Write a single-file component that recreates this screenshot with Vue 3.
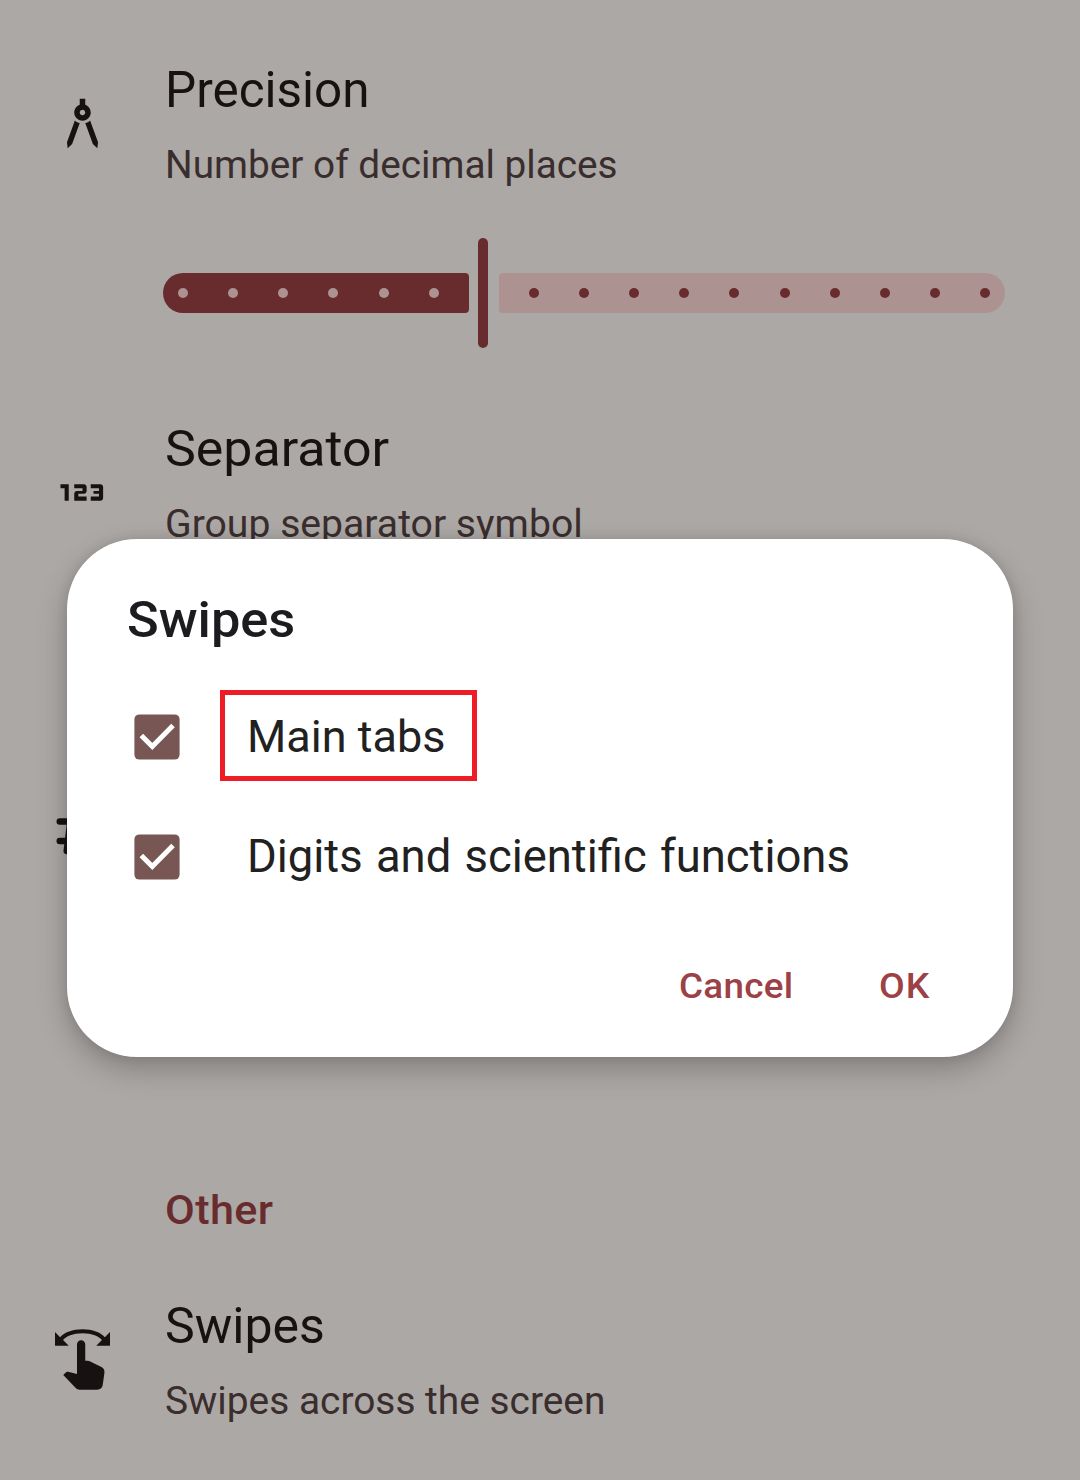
<script setup>
const step = 50.125
const activeTicks = Array.from({ length: 6 }, (_, i) => 15 + i * step)
const inactiveTicks = Array.from({ length: 10 }, (_, i) => 29.9 + i * step)
const options = [
  { label: 'Main tabs', marked: true, cls: 'o-main' },
  { label: 'Digits and scientific functions', marked: false, cls: 'o-digits' }
]
</script>

<template>
  <div class="screen">
    <main class="settings">
      <section class="item precision">
        <svg class="icon" viewBox="-.18 -.18 24 24"><path d="M6.36 18.78 6.61 21l1.62-1.54 2.77-7.6c-.68-.17-1.28-.51-1.77-.98zM14.77 10.88c-.49.47-1.1.81-1.77.98l2.77 7.6L17.39 21l.26-2.22zM15 8c0-1.3-.84-2.4-2-2.82V3h-2v2.18C9.84 5.6 9 6.7 9 8c0 1.66 1.34 3 3 3s3-1.34 3-3zm-3 1c-.55 0-1-.45-1-1s.45-1 1-1 1 .45 1 1-.45 1-1 1z" /></svg>
        <div class="body">
          <h2><span class="t-precision">Precision</span></h2>
          <p><span class="s-precision">Number of decimal places</span></p>
          <div class="slider">
            <div class="track active">
              <i v-for="x in activeTicks" :key="x" class="tick" :style="{ left: x + 'px' }"></i>
            </div>
            <div class="thumb"></div>
            <div class="track inactive">
              <i v-for="x in inactiveTicks" :key="x" class="tick" :style="{ left: x + 'px' }"></i>
            </div>
          </div>
        </div>
      </section>

      <section class="item separator">
        <svg class="icon digits" viewBox="-.18 -.18 24 24"><path d="M7 15H5.500v-4.500H4V9h3zM13.500 13.500h-3v-1h2c.55 0 1-.45 1-1V10c0-.55-.45-1-1-1H9v1.500h3v1h-2c-.55 0-1 .45-1 1V15h4.500zM19.500 14v-4c0-.55-.45-1-1-1H15v1.500h3v1h-2v1h2v1h-3V15h3.500c.55 0 1-.45 1-1z" /></svg>
        <div class="body">
          <h2><span class="t-separator">Separator</span></h2>
          <p><span class="s-separator">Group separator symbol</span></p>
        </div>
      </section>

      <section class="item number">
        <svg class="icon hash" viewBox="-.8 0 66 66"><path d="M10 18.500h46M10 38h46M22 7l-5 41M46 7l-5 41" /></svg>
      </section>

      <h3><span class="t-other">Other</span></h3>

      <section class="item swipes">
        <svg class="icon" viewBox="-.18 -.18 24 24"><path d="M18.890 14.750l-4.090-2.040c-.28-.14-.58-.21-.89-.21H13v-6C13 5.670 12.330 5 11.500 5S10 5.670 10 6.500v10.740L6.750 16.500c-.33-.07-.68.03-.92.28L5 17.620l4.540 4.790c.38.380.89.590 1.420.590h6.410c1 0 1.840-.73 1.980-1.720l.63-4.460c.12-.85-.32-1.680-1.090-2.070zM20.130 3.870C18.690 2.170 15.600 1 12 1S5.310 2.170 3.870 3.870L2 2v5h5L4.930 4.930c1-1.290 3.700-2.430 7.070-2.430s6.070 1.140 7.070 2.430L17 7h5V2z" /></svg>
        <div class="body">
          <h2><span class="t-swipes">Swipes</span></h2>
          <p><span class="s-swipes">Swipes across the screen</span></p>
        </div>
      </section>
    </main>

    <div class="dialog" role="dialog">
      <h1><span class="t-dialog">Swipes</span></h1>
      <label v-for="o in options" :key="o.label" class="option">
        <svg class="check" viewBox="0 0 46 46"><rect x=".4" y=".4" width="45.200" height="45.200" rx="5" /><path d="M7.300 21.500 18.300 32.500 39 11.500" /></svg>
        <span :class="o.cls">{{ o.label }}</span>
        <i v-if="o.marked" class="marker"></i>
      </label>
      <div class="actions">
        <button class="cancel"><span class="b-cancel">Cancel</span></button>
        <button class="ok"><span class="b-ok">OK</span></button>
      </div>
    </div>
  </div>
</template>

<style>
body { margin: 0; background: #aca8a6; }
</style>

<style scoped>
.screen { position: relative; width: 1080px; height: 1480px; overflow: hidden; background: #aca8a6; font-family: Roboto, "Noto Sans", sans-serif; color: #171211; }
.settings { display: flex; flex-direction: column; padding-top: 60px; }
.item { display: flex; align-items: flex-start; flex: none; padding-left: 49px; }
.precision, .separator { height: 359px; }
.icon { width: 66px; height: 66px; flex: none; margin-top: 30.4px; fill: #171211; }
.digits { margin-top: 40.400px; }
.body { margin-left: 50px; }
h1, h2, h3, p { margin: 0; font-weight: 400; white-space: nowrap; }
h1 span, h2 span, h3 span, p span, button span { display: inline-block; transform-origin: 0 50%; }
h2 { font-size: 50px; line-height: 60px; }
p { margin-top: 20px; font-size: 38px; line-height: 50px; color: #3a2d2d; }
.slider { display: flex; align-items: center; width: 842px; height: 110px; margin: 48px 0 0 -2px; }
.track { position: relative; height: 40px; }
.active { width: 306px; background: #692c2e; border-radius: 20px 4px 4px 20px; }
.inactive { width: 506px; background: #ac9291; border-radius: 4px 20px 20px 4px; }
.thumb { width: 10px; height: 110px; margin: 0 11px 0 9px; border-radius: 5px; background: #692c2e; }
.tick { position: absolute; top: 15px; width: 10px; height: 10px; border-radius: 50%; background: #ac9291; }
.inactive .tick { background: #692c2e; }
.number { height: 407px; }
.hash { margin-top: 25px; fill: none; stroke: #171211; stroke-width: 6.6; stroke-linecap: round; }
h3 { margin-left: 165px; font-size: 40.500px; line-height: 50px; font-weight: 500; color: #692c2e; }
.swipes { margin-top: 61px; }
.t-precision { transform: scaleX(.988); }
.s-precision { transform: scaleX(1.02); }
.t-separator { transform: scaleX(1.038); }
.s-separator { transform: scaleX(1.030); }
.t-other { transform: scaleX(1.065); letter-spacing: .4px; }
.s-swipes { transform: scaleX(1.023); }

.dialog { position: absolute; left: 67px; top: 539px; width: 946px; height: 517.5px; box-sizing: border-box; padding: 49px 60px 0; border-radius: 70px; background: #fff; box-shadow: 0 12px 30px rgba(0, 0, 0, .24), 0 0 12px rgba(0, 0, 0, .1); }
h1 { font-size: 50px; line-height: 64px; font-weight: 500; color: #1c1b1f; }
.t-dialog { transform: scaleX(1.047); }
h1 + .option { margin-top: 25px; }
.option { position: relative; display: flex; align-items: center; height: 120px; padding-left: 7px; font-size: 45px; line-height: 120px; color: #212121; white-space: nowrap; }
.o-digits { font-size: 45.400px; word-spacing: 2px; }
.check { flex: none; width: 46px; height: 46px; margin-right: 67px; }
.check rect { fill: #775654; }
.check path { fill: none; stroke: #fff; stroke-width: 5; }
.marker { position: absolute; left: 93px; top: 13px; width: 257px; height: 91px; box-sizing: border-box; border: 5px solid #ee1c25; }
.actions { display: flex; margin: 44px 0 0 551.5px; }
button { padding: 0; border: 0; background: none; font: 500 35.400px/50px Roboto, sans-serif; color: #9c4146; white-space: nowrap; text-align: left; }
.cancel { width: 200px; }
.b-cancel { transform: scaleX(1.04); letter-spacing: .300px; }
.b-ok { transform: scaleX(1.055); letter-spacing: 1px; }
</style>
